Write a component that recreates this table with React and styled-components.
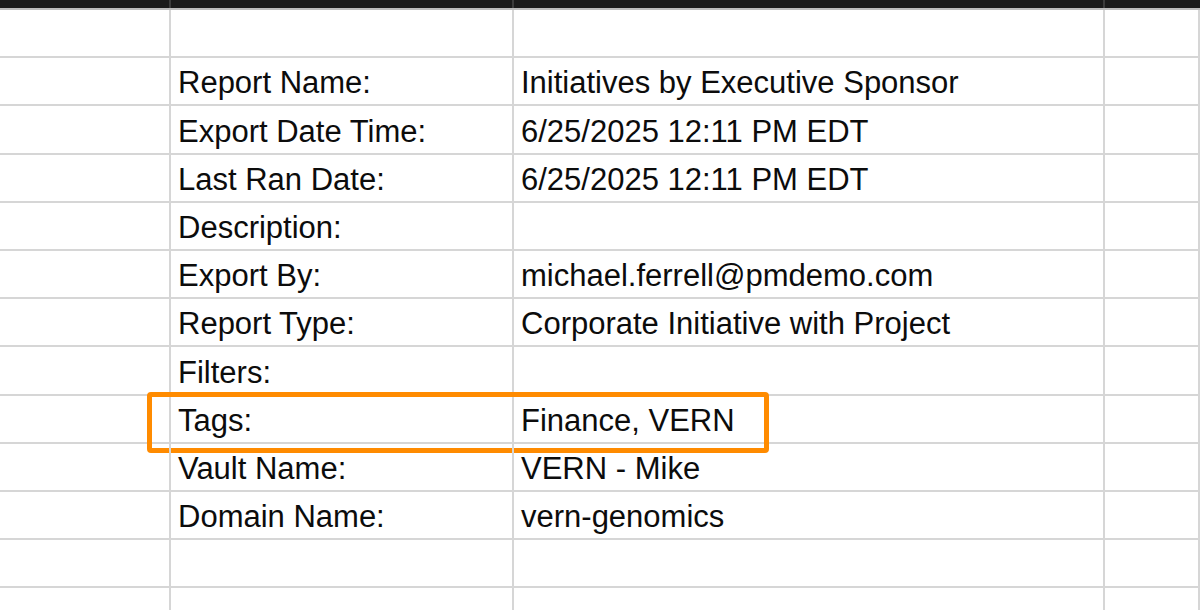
import React from 'react';
import styled, { createGlobalStyle } from 'styled-components';

const GlobalStyle = createGlobalStyle`
  html, body {
    margin: 0;
    padding: 0;
    background: #ffffff;
  }
  body {
    width: 1200px;
    height: 610px;
    overflow: hidden;
    font-family: "Liberation Sans", Arial, sans-serif;
  }
`;

const COLS = '171px 343px 591px 1fr';

const Sheet = styled.div`
  width: 1200px;
  height: 610px;
  overflow: hidden;
  background: #ffffff;
`;

const HeaderBar = styled.div`
  display: grid;
  grid-template-columns: ${COLS};
  height: 8px;
  background: #1b1b1b;
  border-bottom: 2px solid #bcbcbc;
`;

const HeaderCell = styled.div`
  border-right: 2px solid #3c3c3c;
`;

const Row = styled.div`
  position: relative;
  display: grid;
  grid-template-columns: ${COLS};
  height: 48.2px;
`;

const Cell = styled.div`
  display: flex;
  align-items: flex-end;
  padding: 0 0 6px 7px;
  border-right: 2px solid #d6d6d6;
  border-bottom: 2px solid #d6d6d6;
  color: #0c0c0c;
  font-size: 31px;
  line-height: 1;
  white-space: nowrap;
  overflow: visible;
`;

const Highlight = styled.div`
  position: absolute;
  left: 147px;
  width: 622px;
  top: -4px;
  height: 61px;
  box-sizing: border-box;
  border: 5px solid #ff8b00;
  border-radius: 4px;
  pointer-events: none;
`;

const rows = [
  ['', ''],
  ['Report Name:', 'Initiatives by Executive Sponsor'],
  ['Export Date Time:', '6/25/2025 12:11 PM EDT'],
  ['Last Ran Date:', '6/25/2025 12:11 PM EDT'],
  ['Description:', ''],
  ['Export By:', 'michael.ferrell@pmdemo.com'],
  ['Report Type:', 'Corporate Initiative with Project'],
  ['Filters:', ''],
  ['Tags:', 'Finance, VERN', true],
  ['Vault Name:', 'VERN - Mike'],
  ['Domain Name:', 'vern-genomics'],
  ['', ''],
  ['', ''],
];

export default function App() {
  return (
    <Sheet>
      <GlobalStyle />
      <HeaderBar>
        <HeaderCell />
        <HeaderCell />
        <HeaderCell />
        <div />
      </HeaderBar>
      {rows.map(([label, value, marked], i) => (
        <Row key={i}>
          <Cell />
          <Cell>{label}</Cell>
          <Cell>{value}</Cell>
          <Cell />
          {marked && <Highlight />}
        </Row>
      ))}
    </Sheet>
  );
}
